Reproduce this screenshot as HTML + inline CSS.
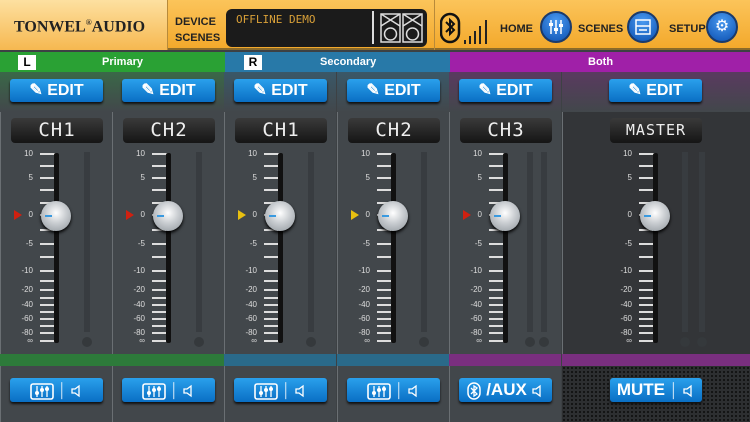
<!DOCTYPE html><html><head><style>
*{margin:0;padding:0;box-sizing:border-box}
body{width:750px;height:422px;overflow:hidden;background:#3d4144;font-family:"Liberation Sans",sans-serif;position:relative}
.a{position:absolute}
.hdr{left:0;top:0;width:750px;height:50px;background:linear-gradient(#fbc45a,#f3a92c);border-bottom:2px solid #8a6a2a}
.btn{position:absolute;background:linear-gradient(#2aa0ec,#0a6fc4);border-radius:3px;color:#fff;font-weight:bold;box-shadow:0 2px 2px #111;text-align:center}
.btn svg{vertical-align:middle}
.nm{position:absolute;background:linear-gradient(#3a3a3a,#151515);border-radius:4px;color:#eee;font-family:"DejaVu Sans Mono",monospace;font-size:19px;text-align:center;line-height:25px;letter-spacing:1px}
.lbl{position:absolute;color:#ddd;font-size:8px;text-align:right;width:22px}
.tk{position:absolute;height:2px;background:#ddd;width:16px}
.knob{position:absolute;width:30px;height:30px;border-radius:50%;background:radial-gradient(circle at 50% 40%,#fff,#c8ccd0 45%,#8d949a 100%);box-shadow:0 2px 3px #000}
.round{position:absolute;width:32px;height:32px;border-radius:50%;background:radial-gradient(circle at 50% 30%,#4a9af0,#0b4fb0);border:2px solid #1b3a6a;color:#fff;text-align:center;line-height:28px;font-size:16px}
.ht{position:absolute;font-weight:bold;font-size:11px;color:#222}
</style></head><body>
<div class="a hdr"></div>
<div class="a" style="left:0;top:0;width:168px;height:50px;background:linear-gradient(#fde0a0,#f6b850);border-right:1px solid #b88a3a"></div>
<div class="a" style="left:14px;top:18px;font-family:'Liberation Serif',serif;font-weight:bold;font-size:16px;color:#222">TONWEL<sup style="font-size:8px">®</sup>AUDIO</div>
<div class="ht" style="left:175px;top:14px;line-height:16px">DEVICE<br>SCENES</div>
<div class="a" style="left:226px;top:9px;width:201px;height:38px;background:#1b1b1b;border-radius:6px"></div>
<div class="a" style="left:236px;top:13px;color:#d9a038;font-family:'DejaVu Sans Mono',monospace;font-size:11px">OFFLINE DEMO</div>
<div class="a" style="left:372px;top:11px;width:2px;height:33px;background:#ddd"></div>
<svg class="a" style="left:380px;top:13px" width="44" height="30"><g fill="none" stroke="#ddd" stroke-width="1.5"><rect x="1" y="1" width="19" height="28"/><rect x="23" y="1" width="19" height="28"/><path d="M1 1L20 13M20 1L1 13M23 1L42 13M42 1L23 13"/><circle cx="10.5" cy="21" r="6"/><circle cx="32.5" cy="21" r="6"/></g></svg>
<div class="a" style="left:434px;top:0;width:1px;height:50px;background:#b88a3a"></div>
<svg class="a" style="left:440px;top:12px" width="56" height="34"><rect x="1" y="2" width="18" height="28" rx="9" fill="none" stroke="#111" stroke-width="2.5"/><path d="M6 10l8 8-4 4V8l4 4-8 8" fill="none" stroke="#111" stroke-width="2"/><g fill="#222"><rect x="24" y="28" width="2" height="4"/><rect x="29" y="24" width="2" height="8"/><rect x="34" y="19" width="2" height="13"/><rect x="39" y="14" width="2" height="18"/><rect x="45" y="8" width="2" height="24"/></g></svg>
<div class="ht" style="left:500px;top:23px">HOME</div>
<div class="round" style="left:540px;top:11px"><svg width="28" height="28"><g stroke="#fff" stroke-width="1.5"><path d="M9 7v14M14 7v14M19 7v14"/></g><g fill="#fff"><rect x="7" y="10" width="4" height="3"/><rect x="12" y="15" width="4" height="3"/><rect x="17" y="11" width="4" height="3"/></g></svg></div>
<div class="ht" style="left:578px;top:23px">SCENES</div>
<div class="round" style="left:627px;top:11px"><svg width="28" height="28"><g fill="none" stroke="#fff" stroke-width="1.5"><rect x="7" y="7" width="14" height="14"/><path d="M7 13h14M10 17h8"/></g></svg></div>
<div class="ht" style="left:669px;top:23px">SETUP</div>
<div class="round" style="left:706px;top:11px">⚙</div>
<div class="a" style="left:0;top:52px;width:225px;height:20px;background:#2aa134"></div>
<div class="a" style="left:225px;top:52px;width:225px;height:20px;background:#2879a8"></div>
<div class="a" style="left:450px;top:52px;width:300px;height:20px;background:#a020a8"></div>
<div class="a" style="left:18px;top:55px;width:18px;height:15px;background:#fff;font-weight:bold;font-size:12px;text-align:center;line-height:15px">L</div>
<div class="a" style="left:244px;top:55px;width:18px;height:15px;background:#fff;font-weight:bold;font-size:12px;text-align:center;line-height:15px">R</div>
<div class="a" style="left:102px;top:56px;color:#fff;font-weight:bold;font-size:11px">Primary</div>
<div class="a" style="left:320px;top:56px;color:#fff;font-weight:bold;font-size:11px">Secondary</div>
<div class="a" style="left:588px;top:56px;color:#fff;font-weight:bold;font-size:11px">Both</div>
<div id="m"></div>
<script>
var spk='<svg width="12" height="14"><path d="M1 5h3l4-3v10l-4-3H1z" fill="none" stroke="#fff" stroke-width="1.3"/></svg>';
var mix='<svg width="24" height="17"><rect x="1" y="1" width="22" height="15" rx="2" fill="none" stroke="#fff" stroke-width="1.6"/><g stroke="#fff" stroke-width="1.3"><path d="M7 3v11M12 3v11M17 3v11"/></g><g fill="#fff"><circle cx="7" cy="10" r="2"/><circle cx="12" cy="7" r="2"/><circle cx="17" cy="6" r="2"/></g></svg>';
var cols=[[0,'CH1','#2d7a3a','#3a6848',0],[112,'CH2','#2d7a3a','#3a6848',0],[224,'CH1','#2a6a8a','#3a5868',1],[337,'CH2','#2a6a8a','#3a5868',1],[449,'CH3','#7a2f80','#5a3a60',2],[562,'MASTER','#7a2f80','#5a3a60',3]];
var h='',labs=[[10,154],[5,178],[0,215],[-5,244],[-10,271],[-20,290],[-40,305],[-60,319],[-80,333],['∞',341]];
var ticks=[154,166,178,190,203,215,230,244,257,271,281,290,298,305,312,319,326,333,341];
cols.forEach(function(c,i){var x=c[0],w=i==5?188:112,f=i==5?93:56;
h+='<div class="a" style="left:'+x+'px;top:72px;width:'+w+'px;height:350px;background:'+(i==5?'#333538':'#42474b')+';border-left:1px solid #6a6f73"></div>';
h+='<div class="a" style="left:'+x+'px;top:72px;width:'+w+'px;height:40px;background:linear-gradient('+c[3]+',#42474b)"></div>';
h+='<div class="a" style="left:'+x+'px;top:354px;width:'+w+'px;height:12px;background:'+c[2]+'"></div>';
if(i==5)h+='<div class="a" style="left:'+x+'px;top:366px;width:188px;height:56px;background:radial-gradient(circle,#111 35%,#2d2f31 40%) 0 0/4px 4px"></div>';
var bx=x+(i==5?47:10);
h+='<div class="btn" style="left:'+bx+'px;top:79px;width:93px;height:23px;font-size:16px;line-height:23px">✎ EDIT</div>';
h+='<div class="nm" style="left:'+(x+(i==5?48:11))+'px;top:118px;width:92px;height:25px;font-size:'+(i==5?15:19)+'px">'+c[1]+'</div>';
var fx=x+f;
ticks.forEach(function(t){h+='<div class="tk" style="left:'+(fx-16)+'px;top:'+(t-1)+'px"></div>'});
labs.forEach(function(l){h+='<div class="lbl" style="left:'+(fx-45)+'px;top:'+(l[1]-5)+'px">'+l[0]+'</div>'});
h+='<div class="a" style="left:'+(fx-2)+'px;top:153px;width:5px;height:190px;background:#111;border-radius:2px"></div>';
h+='<div class="knob" style="left:'+(fx-15)+'px;top:201px"></div><div class="a" style="left:'+(fx-11)+'px;top:215px;width:7px;height:2px;background:#3a9ae0"></div>';
if(i<5)h+='<div class="a" style="left:'+(x+14)+'px;top:210px;width:0;height:0;border-left:8px solid '+(c[4]==1?'#e8c010':'#d02010')+';border-top:5px solid transparent;border-bottom:5px solid transparent"></div>';
var ms=(i>=4)?(i==5?[x+120,x+137]:[x+78,x+92]):[x+84];
ms.forEach(function(m){h+='<div class="a" style="left:'+m+'px;top:152px;width:6px;height:180px;background:#383c40"></div><div class="a" style="left:'+(m-2)+'px;top:337px;width:10px;height:10px;border-radius:50%;background:#35393c"></div>'});
if(i<4)h+='<div class="btn" style="left:'+bx+'px;top:378px;width:93px;height:24px;font-size:14px;line-height:24px">'+mix+' <span style="font-weight:normal;opacity:.8">│</span> '+spk+'</div>';
else if(i==4)h+='<div class="btn" style="left:'+bx+'px;top:378px;width:93px;height:24px;font-size:17px;line-height:24px"><svg width="14" height="18"><rect x="1" y="1" width="12" height="16" rx="6" fill="none" stroke="#fff" stroke-width="1.5"/><path d="M4 6l6 6-3 2V4l3 2-6 6" fill="none" stroke="#fff" stroke-width="1.3"/></svg> /AUX '+spk+'</div>';
else h+='<div class="btn" style="left:'+(x+48)+'px;top:378px;width:92px;height:24px;font-size:17px;line-height:24px">MUTE <span style="font-weight:normal;opacity:.8;font-size:14px">│</span> '+spk+'</div>';
});
document.getElementById('m').innerHTML=h;
</script>
</body></html>
